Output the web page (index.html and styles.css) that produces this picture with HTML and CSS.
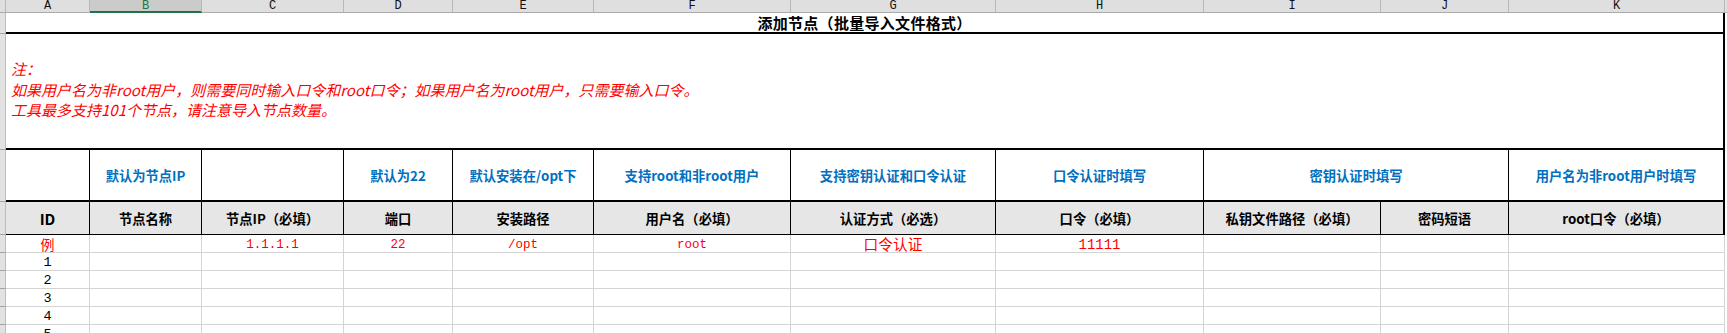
FILE: index.html
```html
<!DOCTYPE html>
<html lang="zh-CN">
<head>
<meta charset="utf-8">
<title>添加节点（批量导入文件格式）</title>
<link rel="stylesheet" href="styles.css">
</head>
<body>
<div class="sheet">
  <div class="ch corner"></div>
  <div class="ch">A</div>
  <div class="ch sel">B</div>
  <div class="ch">C</div>
  <div class="ch">D</div>
  <div class="ch">E</div>
  <div class="ch">F</div>
  <div class="ch">G</div>
  <div class="ch">H</div>
  <div class="ch">I</div>
  <div class="ch">J</div>
  <div class="ch">K</div>
  <div class="ch end"></div>

  <div class="rh"></div>
  <div class="cell title">添加节点（批量导入文件格式）</div>
  <div class="pad"></div>

  <div class="rh"></div>
  <div class="notes">
    <p>注：</p>
    <p>如果用户名为非root用户，则需要同时输入口令和root口令；如果用户名为root用户，只需要输入口令。</p>
    <p>工具最多支持101个节点，请注意导入节点数量。</p>
  </div>
  <div class="pad"></div>

  <div class="rh"></div>
  <div class="cell hint"></div>
  <div class="cell hint">默认为节点IP</div>
  <div class="cell hint"></div>
  <div class="cell hint">默认为22</div>
  <div class="cell hint">默认安装在/opt下</div>
  <div class="cell hint">支持root和非root用户</div>
  <div class="cell hint">支持密钥认证和口令认证</div>
  <div class="cell hint">口令认证时填写</div>
  <div class="cell hint span2">密钥认证时填写</div>
  <div class="cell hint last">用户名为非root用户时填写</div>
  <div class="pad"></div>

  <div class="rh"></div>
  <div class="cell head id">ID</div>
  <div class="cell head">节点名称</div>
  <div class="cell head">节点IP（必填）</div>
  <div class="cell head">端口</div>
  <div class="cell head">安装路径</div>
  <div class="cell head">用户名（必填）</div>
  <div class="cell head">认证方式（必选）</div>
  <div class="cell head">口令（必填）</div>
  <div class="cell head">私钥文件路径（必填）</div>
  <div class="cell head">密码短语</div>
  <div class="cell head last">root口令（必填）</div>
  <div class="pad"></div>

  <div class="rh"></div>
  <div class="cell data red cjk">例</div>
  <div class="cell data"></div>
  <div class="cell data red">1.1.1.1</div>
  <div class="cell data red">22</div>
  <div class="cell data red">/opt</div>
  <div class="cell data red">root</div>
  <div class="cell data red cjk big">口令认证</div>
  <div class="cell data red big">11111</div>
  <div class="cell data"></div>
  <div class="cell data"></div>
  <div class="cell data"></div>
  <div class="pad"></div>

  <div class="rh"></div>
  <div class="cell data num">1</div>
  <div class="cell data"></div><div class="cell data"></div><div class="cell data"></div><div class="cell data"></div><div class="cell data"></div><div class="cell data"></div><div class="cell data"></div><div class="cell data"></div><div class="cell data"></div><div class="cell data"></div>
  <div class="pad"></div>

  <div class="rh"></div>
  <div class="cell data num">2</div>
  <div class="cell data"></div><div class="cell data"></div><div class="cell data"></div><div class="cell data"></div><div class="cell data"></div><div class="cell data"></div><div class="cell data"></div><div class="cell data"></div><div class="cell data"></div><div class="cell data"></div>
  <div class="pad"></div>

  <div class="rh"></div>
  <div class="cell data num">3</div>
  <div class="cell data"></div><div class="cell data"></div><div class="cell data"></div><div class="cell data"></div><div class="cell data"></div><div class="cell data"></div><div class="cell data"></div><div class="cell data"></div><div class="cell data"></div><div class="cell data"></div>
  <div class="pad"></div>

  <div class="rh"></div>
  <div class="cell data num">4</div>
  <div class="cell data"></div><div class="cell data"></div><div class="cell data"></div><div class="cell data"></div><div class="cell data"></div><div class="cell data"></div><div class="cell data"></div><div class="cell data"></div><div class="cell data"></div><div class="cell data"></div>
  <div class="pad"></div>

  <div class="rh"></div>
  <div class="cell data num">5</div>
  <div class="cell data"></div><div class="cell data"></div><div class="cell data"></div><div class="cell data"></div><div class="cell data"></div><div class="cell data"></div><div class="cell data"></div><div class="cell data"></div><div class="cell data"></div><div class="cell data"></div>
  <div class="pad"></div>
</div>
</body>
</html>
```

FILE: styles.css
```css
* {
  box-sizing: border-box;
  margin: 0;
  padding: 0;
}

html,
body {
  background: #ffffff;
  overflow: hidden;
}

body {
  font-family: "Noto Sans CJK SC", "Noto Sans", sans-serif;
  color: #000;
}

.sheet {
  display: grid;
  grid-template-columns: 6px 84px 112px 142px 109px 141px 197px 205px 208px 177px 128px 216px 2px;
  grid-template-rows: 13px 21px 116px 52px 33px repeat(6, 18px);
  width: 1727px;
  height: 333px;
  overflow: hidden;
}

/* column header strip */
.ch {
  background: #dfdfdf;
  border-right: 1px solid #b8b8b8;
  border-bottom: 1px solid #ababab;
  font: 12px/12px "Liberation Mono", monospace;
  text-align: center;
  color: #111;
}

.ch.sel {
  background: #cbcbcb;
  color: #217346;
  border-bottom: 2px solid #217346;
}

.ch.end {
  border-right: none;
}

/* row header strip */
.rh {
  background: #e2e2e2;
  border-right: 1px solid #bdbdbd;
  border-bottom: 1px solid #a3a3a3;
}

.pad {
  background: #fff;
}

.cell {
  display: flex;
  align-items: center;
  justify-content: center;
  white-space: nowrap;
  overflow: hidden;
}

.title {
  grid-column: span 11;
  border-bottom: 2px solid #000;
  border-right: 2px solid #000;
  font-size: 15px;
  font-weight: 700;
  letter-spacing: 0.3px;
}

.notes {
  grid-column: span 11;
  display: flex;
  flex-direction: column;
  justify-content: center;
  padding: 0 0 2px 5px;
  border-bottom: 2px solid #000;
  border-right: 2px solid #000;
  color: #ff0000;
  font-size: 15px;
  font-style: italic;
  line-height: 20.5px;
  white-space: nowrap;
}

.hint {
  border-right: 1px solid #000;
  border-bottom: 2px solid #000;
  color: #0070c0;
  font-size: 13.3px;
  font-weight: 700;
}

.hint.span2 {
  grid-column: span 2;
}

.hint.last,
.head.last {
  border-right: 2px solid #000;
}

.head {
  background: #e7e6e6;
  border-right: 1px solid #000;
  border-bottom: 1px solid #000;
  font-size: 13.3px;
  font-weight: 700;
  padding-top: 1px;
}

.head.id {
  font-size: 15px;
}

.data {
  border-right: 1px solid #d4d4d4;
  border-bottom: 1px solid #d4d4d4;
  font: 12.5px/14px "Liberation Mono", monospace;
  padding-top: 3px;
  overflow: visible;
}

.data.num {
  font-size: 13.5px;
}

.data.red {
  color: #ff0000;
}

.data.cjk {
  font-family: "Noto Sans CJK SC", sans-serif;
  font-size: 14px;
  line-height: 16px;
  padding-top: 1px;
}

.data.big {
  font-size: 14px;
}

.data.cjk.big {
  font-size: 14.7px;
}
```
